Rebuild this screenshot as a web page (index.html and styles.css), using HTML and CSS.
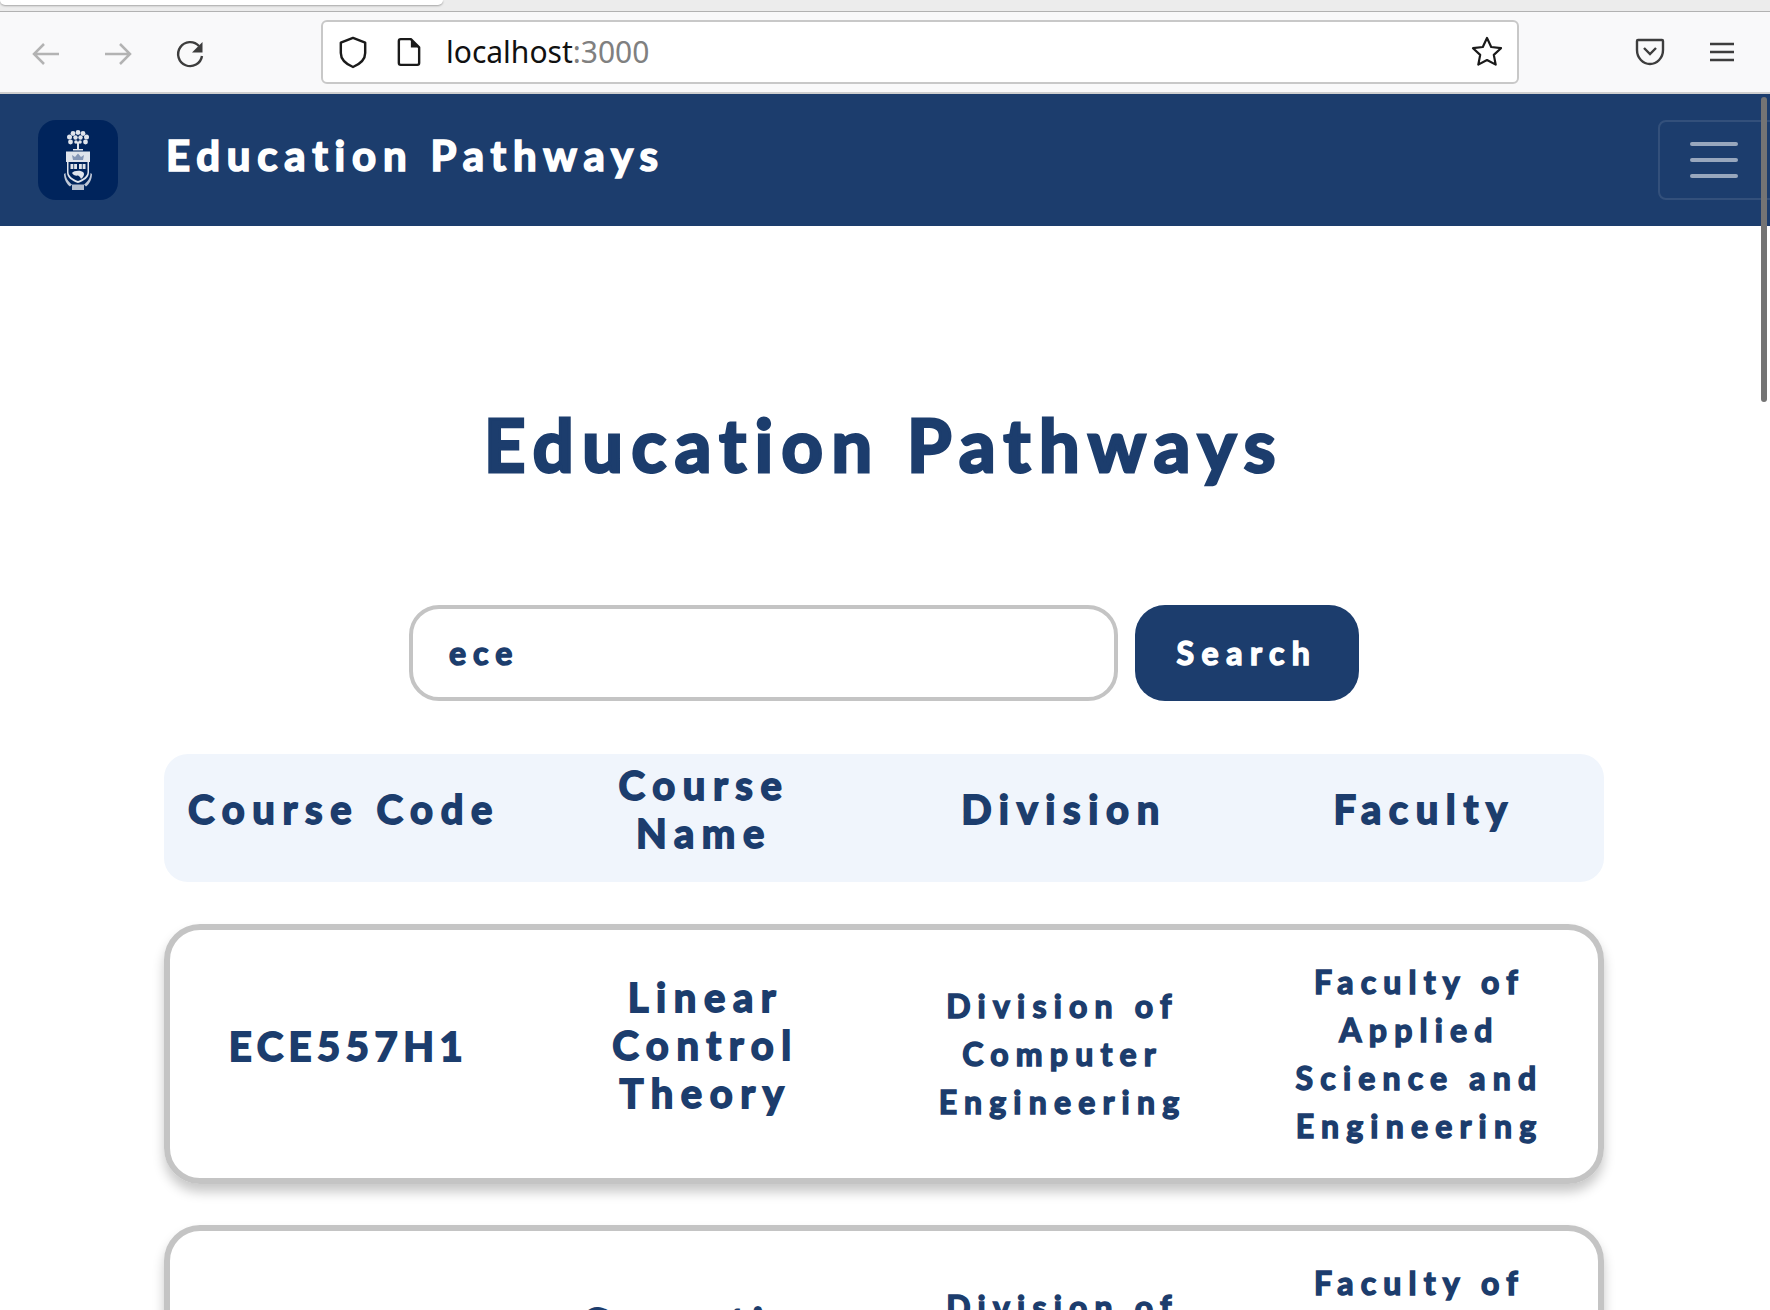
FILE: index.html
```html
<!DOCTYPE html>
<html lang="en">
<head>
<meta charset="utf-8">
<title>Education Pathways</title>
<link rel="stylesheet" href="styles.css">
</head>
<body>
<div class="tabstrip"><div class="tab"></div></div>
<div class="toolbar">
  <div class="nav-icons">
    <svg class="tb-icon" viewBox="0 0 32 32"><path d="M29 16H4M14 6 4 16l10 10" class="s-grey"/></svg>
    <svg class="tb-icon" viewBox="0 0 32 32"><path d="M3 16h25M18 6l10 10-10 10" class="s-grey"/></svg>
    <svg class="tb-icon" viewBox="0 0 32 32"><path d="M25 8A12 12 0 1 0 28 18" class="s-dark"/><path d="M28.500 4v10.500H18z" class="f-dark"/></svg>
  </div>
  <div class="urlbar">
    <svg class="ub-shield" viewBox="0 0 32 36"><path d="M16 3 29 8v11c0 7-6 12-13 15C9 31 3 26 3 19V8z" class="s-black"/></svg>
    <svg class="ub-page" viewBox="0 0 26 32"><path d="M4 2h11l9 9v17a2 2 0 0 1-2 2H4a2 2 0 0 1-2-2V4a2 2 0 0 1 2-2z" class="s-black"/><path d="M15 2l9 9h-9z" class="f-black"/></svg>
    <span class="url"><span class="host">localhost</span><span class="port">:3000</span></span>
    <svg class="ub-star" viewBox="0 0 34 34"><path d="M17 3l4.200 9 9.800 1.200-7.200 6.700 1.900 9.700L17 25l-8.700 4.600 1.900-9.700L3 13.200 12.800 12z" class="s-star"/></svg>
  </div>
  <div class="right-icons">
    <svg class="pocket" viewBox="0 0 30 28"><path d="M3 2h24a1 1 0 0 1 1 1v9c0 8-6 14-13 14S2 20 2 12V3a1 1 0 0 1 1-1z" class="s-dark"/><path d="M9 10l6 6 6-6" class="s-dark"/></svg>
    <svg class="menu" viewBox="0 0 26 22"><path d="M1 3h24M1 11h24M1 19h24" class="s-dark"/></svg>
  </div>
</div>
<header class="navbar">
  <div class="logo">
    <svg viewBox="0 0 28 60" class="crest">
      <g fill="#dfe4ec">
        <circle cx="14" cy="2.500" r="2.400"/><circle cx="9" cy="3.500" r="2.400"/><circle cx="19" cy="3.500" r="2.400"/>
        <circle cx="5.500" cy="7" r="2.500"/><circle cx="11.500" cy="7.500" r="2.200"/><circle cx="16.500" cy="7.500" r="2.200"/><circle cx="22.500" cy="7" r="2.500"/>
        <circle cx="6.500" cy="12" r="2.400"/><circle cx="12" cy="12" r="1.800"/><circle cx="16" cy="12" r="1.800"/><circle cx="21.500" cy="12" r="2.400"/>
        <path d="M13 12h2v7h-2zM9 19h10v1.500H9z"/>
        <path d="M2 21.500h24v10.500H2z"/>
        <path d="M3 32h1.500v10c0 4 4 7 9.500 9 5.500-2 9.500-5 9.500-9V32H25v10.500c0 5-5 8.500-11 10.500C8 51 3 47.500 3 42.500z"/>
        <path d="M6.500 34h6.500v5H6.500zM15 34h6.500v5H15z"/>
        <path d="M8 43c2-2.500 9-3 11.500-.5 1.500 2-.5 5-2.500 6.500-.5-2-2-3-3-3.500-2.500.5-5-.5-6-2.500z"/>
        <path d="M1.500 43c0 5 3 9 6.500 11.500l-2 2C2.500 54 0 49 0 44zM26.500 43c0 5-3 9-6.500 11.500l2 2c3.500-2.500 6-7.500 6-12.500z" opacity=".85"/>
        <rect x="8" y="54.500" width="12" height="5.500" opacity=".8"/>
      </g>
      <path d="M9 30l-1-5 3 2 3-3.500 3 3.500 3-2-1 5z" fill="#8496b6"/>
      <path d="M9.700 34v5M18.300 34v5" stroke="#002a5c" stroke-width=".8"/>
    </svg>
  </div>
  <div class="brand">Education Pathways</div>
  <div class="toggler"><span></span><span></span><span></span></div>
</header>
<main class="content">
  <h1 class="page-title">Education Pathways</h1>
  <form class="search">
    <div class="search-input">ece</div>
    <div class="search-btn">Search</div>
  </form>
  <div class="table">
    <div class="head-row">
      <div class="cell wide">Course Code</div>
      <div class="cell">Course Name</div>
      <div class="cell">Division</div>
      <div class="cell">Faculty</div>
    </div>
    <div class="card">
      <div class="cell wide code">ECE557H1</div>
      <div class="cell">Linear Control Theory</div>
      <div class="cell small">Division of Computer Engineering</div>
      <div class="cell small">Faculty of Applied Science and Engineering</div>
    </div>
    <div class="card">
      <div class="cell wide code">ECE344H1</div>
      <div class="cell">Operating Systems</div>
      <div class="cell small">Division of Computer Engineering</div>
      <div class="cell small">Faculty of Applied Science and Engineering</div>
    </div>
  </div>
</main>
<div class="scrollbar"></div>
</body>
</html>
```
FILE: styles.css
```css
* { box-sizing: border-box; }
html, body { margin: 0; height: 1310px; overflow: hidden; background: #fff; }
body { font-family: "Lato", "Noto Sans", sans-serif; color: #1c3d6d; position: relative; }

.tabstrip { height: 12px; background: #ececec; border-bottom: 1px solid #b2b2b2; }
.tab { width: 443px; height: 5px; background: #fff; border-radius: 0 0 6px 6px; box-shadow: 0 1px 2px rgba(0,0,0,.3); }

.toolbar { height: 82px; background: #f9f9fa; border-bottom: 2px solid #cfcfcf; display: flex; align-items: center; position: relative; }
.nav-icons { width: 321px; display: flex; gap: 40px; padding: 4px 0 0 30px; }
.tb-icon { width: 32px; height: 32px; }
.urlbar { width: 1198px; height: 64px; margin-top: -1px; background: #fff; border: 2px solid #c8c8c8; border-radius: 6px; display: flex; align-items: center; padding: 0 13px 0 15px; }
.ub-shield { width: 30px; height: 34px; margin-right: 29px; }
.ub-page { width: 24px; height: 30px; margin-right: 25px; }
.url { font-family: "Noto Sans", sans-serif; font-size: 30px; flex: 1; }
.host { color: #111; }
.port { color: #808080; }
.ub-star { width: 34px; height: 34px; }
.right-icons { flex: 1; display: flex; align-items: center; justify-content: space-between; padding: 0 35px 1px 116px; }
.pocket { width: 30px; height: 28px; }
.menu { width: 26px; height: 22px; }

.s-grey { fill: none; stroke: #b3b3b3; stroke-width: 2.500; }
.s-dark { fill: none; stroke: #3d3d3d; stroke-width: 2.400; }
.s-black { fill: none; stroke: #1a1a1a; stroke-width: 2.600; stroke-linejoin: round; }
.s-star { fill: none; stroke: #1a1a1a; stroke-width: 2.200; stroke-linejoin: round; }
.f-dark { fill: #3d3d3d; }
.f-black { fill: #1a1a1a; }

.navbar { height: 132px; background: #1c3d6d; display: flex; align-items: center; padding-left: 38px; position: relative; overflow: hidden; }
.logo { width: 80px; height: 80px; border-radius: 18px; background: #00245c; display: flex; align-items: center; justify-content: center; }
.crest { width: 28px; height: 60px; }
.brand { margin-left: 48px; margin-top: -10px; font-size: 42px; font-weight: 700; color: #fff; letter-spacing: 6.800px; -webkit-text-stroke: 1.700px #fff; }
.toggler { position: absolute; left: 1658px; top: 26px; width: 140px; height: 80px; border: 2px solid rgba(255,255,255,.1); border-radius: 8px; display: flex; flex-direction: column; gap: 12px; padding: 20px 0 0 30px; }
.toggler span { display: block; width: 48px; height: 4px; border-radius: 2px; background: rgba(255,255,255,.55); }

.content { width: 1440px; margin: 0 0 0 164px; }
.page-title { margin: 0; padding-top: 170px; height: 379px; text-align: center; font-size: 72px; line-height: 96px; font-weight: 700; letter-spacing: 8.600px; -webkit-text-stroke: 3px #1c3d6d; }
.search { display: flex; gap: 17px; margin-left: 245px; }
.search-input { width: 709px; height: 96px; border: 4px solid #c4c4c4; border-radius: 30px; padding: 0 0 2px 36px; display: flex; align-items: center; font-size: 32px; font-weight: 700; letter-spacing: 7px; -webkit-text-stroke: 1.500px #1c3d6d; }
.search-btn { width: 224px; height: 96px; border-radius: 30px; background: #1c3d6d; color: #fff; display: flex; align-items: center; justify-content: center; padding-bottom: 2px; font-size: 32px; font-weight: 700; letter-spacing: 7.500px; -webkit-text-stroke: 1.500px #fff; }

.table { margin-top: 53px; }
.head-row, .card { display: grid; grid-template-columns: repeat(4, 1fr); align-items: center; text-align: center; font-size: 40px; line-height: 48px; font-weight: 700; letter-spacing: 7.600px; -webkit-text-stroke: 1.800px #1c3d6d; }
.head-row { height: 128px; background: #f0f5fc; border-radius: 24px; }
.cell { padding: 0 50px 18px; }
.cell.wide { padding-left: 10px; padding-right: 10px; }
.code { letter-spacing: 5.500px; padding-bottom: 16px; }
.card { height: 260px; margin-top: 42px; border: 6px solid #c4c4c4; border-radius: 36px; box-shadow: 0 8px 12px rgba(0,0,0,.22); }
.card + .card { margin-top: 41px; }
.cell.small { font-size: 32px; letter-spacing: 7.200px; padding: 0 30px; -webkit-text-stroke: 1.500px #1c3d6d; }

.scrollbar { position: absolute; left: 1761px; top: 97px; width: 6px; height: 305px; border-radius: 3px; background: #747474; }
```
